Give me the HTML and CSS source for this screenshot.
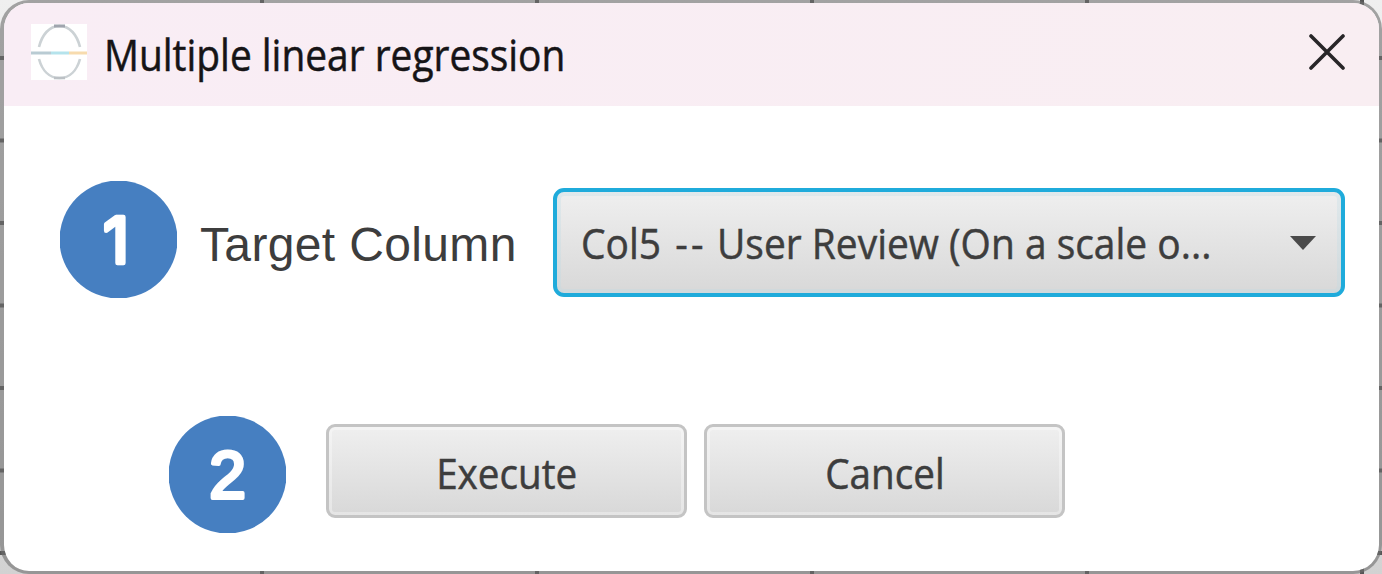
FILE: index.html
```
<!DOCTYPE html>
<html lang="en">
<head>
<meta charset="utf-8">
<title>Multiple linear regression</title>
<link rel="stylesheet" href="styles.css">
</head>
<body>
<main class="dialog">
  <header class="titlebar">
    <svg class="app-icon" viewBox="0 0 56 56" aria-hidden="true">
      <rect width="56" height="56" fill="#fff"/>
      <g fill="none" stroke="#ccd2d5" stroke-width="2.6">
        <path d="M8 23C11 11 18 2 28.500 2S46 11 49 23"/>
        <path d="M8 35C11 46 18 54 28.500 54S46 46 49 35"/>
      </g>
      <path d="M23 2H34" stroke="#a0a5ae" stroke-width="3"/>
      <path d="M23 54H34" stroke="#bcc1c5" stroke-width="2.6"/>
      <path d="M0 29H20" stroke="#b9cbd3" stroke-width="3"/>
      <path d="M20 29H38" stroke="#b5e3ec" stroke-width="3"/>
      <path d="M38 29H56" stroke="#f7dbae" stroke-width="3"/>
    </svg>
    <h1 class="title"><span class="label title-label">Multiple linear regression</span></h1>
    <button class="close" aria-label="Close">
      <svg viewBox="0 0 36 36"><path d="M2 2L34 34M34 2L2 34"/></svg>
    </button>
  </header>
  <section class="field">
    <svg class="badge" viewBox="0 0 117 117"><circle cx="58.500" cy="58.500" r="59"/><text x="56" y="82">1</text></svg>
    <span class="field-label">Target Column</span>
    <button class="select">
      <span class="label select-label">Col5 <span class="dashes">--</span> User Review (On a scale o...</span>
      <svg class="arrow" viewBox="0 0 26 14"><path d="M0 0H26L13 14Z"/></svg>
    </button>
  </section>
  <footer class="actions">
    <svg class="badge" viewBox="0 0 117 117"><circle cx="58.500" cy="58.500" r="59"/><text class="two" x="58.500" y="81.500">2</text></svg>
    <button class="button execute"><span class="label button-label">Execute</span></button>
    <button class="button cancel"><span class="label button-label">Cancel</span></button>
  </footer>
</main>
</body>
</html>
```
FILE: styles.css
```
* { box-sizing: border-box; }
body {
  margin: 0;
  height: 574px;
  overflow: hidden;
  background:
    linear-gradient(90deg, #555 4px, transparent 4px) 260px 0 / 275px 100%,
    linear-gradient(#555 4px, transparent 4px) 0 56px / 100% 82.500px,
    linear-gradient(#efefef, #d2d2d2);
}
.dialog {
  width: 1382px;
  height: 574px;
  display: flex;
  flex-direction: column;
  border: 3px solid rgba(110, 110, 110, .6);
  border-left-width: 4px;
  border-radius: 29px;
  background: #fff;
  background-clip: padding-box;
  overflow: hidden;
}
.titlebar {
  height: 103px;
  flex: none;
  display: flex;
  align-items: center;
  padding: 0 34px 0 27px;
  background: linear-gradient(90deg, #f9edf5, #f9eef2);
}
.app-icon { width: 56px; height: 56px; margin-bottom: 6px; flex: none; }
.title {
  margin: 0 auto 0 16.500px;
  font: 400 43px/60px "Open Sans", "Noto Sans", sans-serif;
  color: #161416;
}
.label {
  display: inline-block;
  white-space: nowrap;
  -webkit-text-stroke: .5px currentColor;
}
.title-label { transform: scaleX(.904); transform-origin: left; }
.close { width: 36px; height: 36px; padding: 0; border: 0; background: none; margin-bottom: 5px; }
.close svg { display: block; width: 36px; height: 36px; fill: none; stroke: #282628; stroke-width: 3.600; stroke-linecap: round; }
.field {
  display: flex;
  align-items: center;
  height: 117px;
  margin-top: 75px;
  padding-left: 56px;
  flex: none;
}
.badge { width: 117px; height: 117px; flex: none; fill: #467fc1; }
.badge text {
  font: 400 63px Inter, "Liberation Sans", sans-serif;
  text-anchor: middle;
  fill: #fff;
  stroke: #fff;
  stroke-width: 4.500;
  stroke-linejoin: round;
}
.badge .two { font: 400 66px "Liberation Sans", sans-serif; stroke-width: 3.800; }
.field-label {
  width: 352px;
  margin: 10px 0 0 23px;
  font: 400 48px/56px "Liberation Sans", Arial, sans-serif;
  letter-spacing: .35px;
  color: #3d3d3d;
  white-space: nowrap;
}
.select {
  width: 792px;
  height: 109px;
  display: flex;
  align-items: center;
  justify-content: space-between;
  margin: 5px 0 0 1px;
  padding: 2px 25px 0 24px;
  border: 4.500px solid #1fabdb;
  border-radius: 11px;
  background: linear-gradient(#efefef, #d8d8d8);
  box-shadow: inset 0 0 0 4px rgba(190, 220, 228, .3);
}
.select-label, .button {
  font: 400 42px/60px "Open Sans", "Noto Sans", sans-serif;
  color: #3d3d3d;
}
.select-label { transform: scaleX(.927); transform-origin: left; }
.dashes { margin-left: 4.500px; letter-spacing: 3.500px; }
.button-label { transform: scaleX(.92); }
.arrow { width: 26px; height: 14px; flex: none; fill: #4a4a4a; }
.actions {
  display: flex;
  align-items: center;
  height: 117px;
  margin-top: 118px;
  padding-left: 165px;
  flex: none;
}
.button {
  width: 361px;
  height: 94px;
  padding: 4px 0 0;
  margin: -7px 0 0 40px;
  border: 3px solid #c4c4c4;
  border-radius: 9px;
  background: linear-gradient(#efefef, #d8d8d8);
  box-shadow: inset 0 0 0 3px rgba(255, 255, 255, .35);
}
.cancel { margin-left: 17px; }
```
